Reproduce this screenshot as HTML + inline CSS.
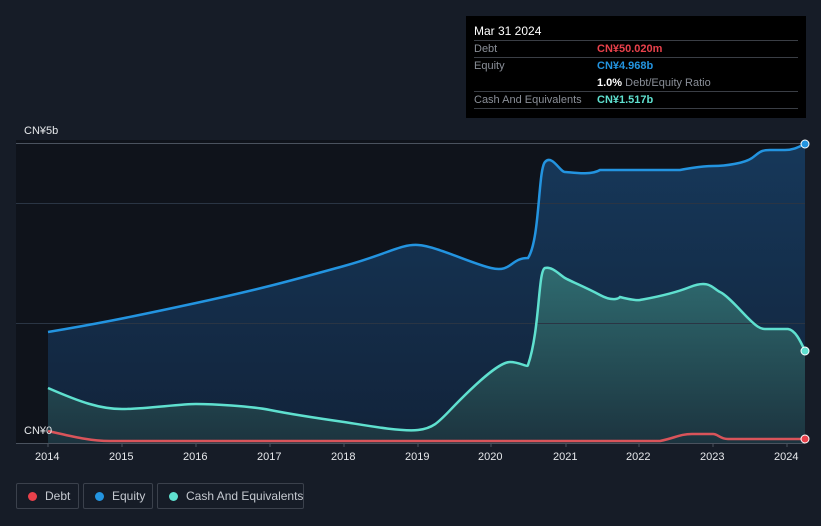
<!DOCTYPE html>
<html><head><meta charset="utf-8"><style>
body{margin:0;width:821px;height:526px;background:#161c27;font-family:"Liberation Sans",sans-serif;overflow:hidden;position:relative}
.tt{position:absolute;left:466px;top:16px;width:340px;height:102px;background:#000;font-size:11px;color:#8a8f98}
.tt .h{position:absolute;left:8px;top:8px;color:#fff;font-size:12px}
.row{position:absolute;left:8px;width:324px;height:17px;border-top:1px solid #3a3e45}
.row span{position:absolute;top:2px;white-space:nowrap}
.lg{position:absolute;top:483px;height:26px;border:1px solid #3b414c;border-radius:2px;color:#c5c9d0;font-size:12px;line-height:24px;box-sizing:border-box;white-space:nowrap}
.lg i{position:absolute;left:11px;top:8px;width:9px;height:9px;border-radius:50%}
.ax{position:absolute;top:451px;color:#e6e8eb;font-size:11px}
</style></head><body>
<svg width="821" height="526" style="position:absolute;left:0;top:0">
<defs>
<linearGradient id="ge" x1="0" y1="0" x2="0" y2="1"><stop offset="0" stop-color="#16385a"/><stop offset="1" stop-color="#12233a"/></linearGradient>
<linearGradient id="gc" x1="0" y1="0" x2="0" y2="1"><stop offset="0" stop-color="#2f6b70"/><stop offset="1" stop-color="#1c343f"/></linearGradient>
</defs>
<rect x="16" y="140" width="789" height="303" fill="#0f131b"/>
<path d="M48,332 C90,325 122,319 196,303 S300,278 344,266 S400,244 418,245 S470,263 491,268 S510,258 528,258 C540,240 538,170 545,162 S560,172 565,172 S590,176 600,170 L680,170 S700,166 713,166 S745,163 752,158 S760,150 770,150 L785,150 C795,150 800,146 805,144 L805,443 L48,443Z" fill="url(#ge)"/>
<path d="M48,388 C80,402 100,409 122,409 S180,404 196,404 S250,406 270,410 S330,420 344,422 S400,432 418,430 S440,420 460,400 S500,362 510,362 S528,368 528,365 C540,330 538,270 545,268 S560,275 565,278 S585,287 600,295 S620,297 620,297 S635,301 640,300 S670,295 690,287 S713,289 720,292 S740,310 748,318 S760,329 765,329 L788,329 C795,330 800,340 805,351 L805,443 L48,443Z" fill="url(#gc)"/>
<g stroke="#2a3544" stroke-width="1"><line x1="16" y1="143.5" x2="805" y2="143.5" stroke="#4a525e"/><line x1="16" y1="203.5" x2="805" y2="203.5"/><line x1="16" y1="323.5" x2="805" y2="323.5"/><line x1="16" y1="443.5" x2="805" y2="443.5" stroke="#4a525e"/></g>
<path d="M48,332 C90,325 122,319 196,303 S300,278 344,266 S400,244 418,245 S470,263 491,268 S510,258 528,258 C540,240 538,170 545,162 S560,172 565,172 S590,176 600,170 L680,170 S700,166 713,166 S745,163 752,158 S760,150 770,150 L785,150 C795,150 800,146 805,144" fill="none" stroke="#2394e0" stroke-width="2.5"/>
<path d="M48,388 C80,402 100,409 122,409 S180,404 196,404 S250,406 270,410 S330,420 344,422 S400,432 418,430 S440,420 460,400 S500,362 510,362 S528,368 528,365 C540,330 538,270 545,268 S560,275 565,278 S585,287 600,295 S620,297 620,297 S635,301 640,300 S670,295 690,287 S713,289 720,292 S740,310 748,318 S760,329 765,329 L788,329 C795,330 800,340 805,351" fill="none" stroke="#5fe0cf" stroke-width="2.5"/>
<path d="M48,431 C70,436 90,441 110,441 L660,441 C675,438 680,434 692,434 L713,434 C718,434 720,439 728,439 L805,439" fill="none" stroke="#d9545a" stroke-width="2.5"/>
<circle cx="805" cy="144" r="4" fill="#2394e0" stroke="#fff" stroke-width="1"/>
<circle cx="805" cy="351" r="4" fill="#5fe0cf" stroke="#fff" stroke-width="1"/>
<circle cx="805" cy="439" r="4" fill="#e8414b" stroke="#fff" stroke-width="1"/>
<g stroke="#4a525e"><line x1="48" y1="443" x2="48" y2="447"/><line x1="122" y1="443" x2="122" y2="447"/><line x1="196" y1="443" x2="196" y2="447"/><line x1="270" y1="443" x2="270" y2="447"/><line x1="344" y1="443" x2="344" y2="447"/><line x1="418" y1="443" x2="418" y2="447"/><line x1="491" y1="443" x2="491" y2="447"/><line x1="566" y1="443" x2="566" y2="447"/><line x1="639" y1="443" x2="639" y2="447"/><line x1="713" y1="443" x2="713" y2="447"/><line x1="787" y1="443" x2="787" y2="447"/></g>
</svg>
<div style="position:absolute;left:24px;top:125px;color:#e6e8eb;font-size:11px">CN¥5b</div>
<div style="position:absolute;left:24px;top:425px;color:#e6e8eb;font-size:11px">CN¥0</div>
<div class="ax" style="left:35px">2014</div><div class="ax" style="left:109px">2015</div><div class="ax" style="left:183px">2016</div><div class="ax" style="left:257px">2017</div><div class="ax" style="left:331px">2018</div><div class="ax" style="left:405px">2019</div><div class="ax" style="left:478px">2020</div><div class="ax" style="left:553px">2021</div><div class="ax" style="left:626px">2022</div><div class="ax" style="left:700px">2023</div><div class="ax" style="left:774px">2024</div>
<div class="tt"><div class="h">Mar 31 2024</div>
<div class="row" style="top:24px"><span style="left:0">Debt</span><span style="left:123px;color:#e8414b;font-weight:bold">CN¥50.020m</span></div>
<div class="row" style="top:41px"><span style="left:0">Equity</span><span style="left:123px;color:#2394e0;font-weight:bold">CN¥4.968b</span><span style="left:123px;top:19px"><b style="color:#fff">1.0%</b> Debt/Equity Ratio</span></div>
<div class="row" style="top:75px"><span style="left:0">Cash And Equivalents</span><span style="left:123px;color:#5fe0cf;font-weight:bold">CN¥1.517b</span></div>
<div class="row" style="top:92px;height:0"></div>
</div>
<div class="lg" style="left:16px;width:63px"><i style="background:#e8414b"></i><span style="position:absolute;left:28px">Debt</span></div>
<div class="lg" style="left:83px;width:70px"><i style="background:#2394e0"></i><span style="position:absolute;left:28px">Equity</span></div>
<div class="lg" style="left:157px;width:147px"><i style="background:#5fe0cf"></i><span style="position:absolute;left:28px">Cash And Equivalents</span></div>
</body></html>
